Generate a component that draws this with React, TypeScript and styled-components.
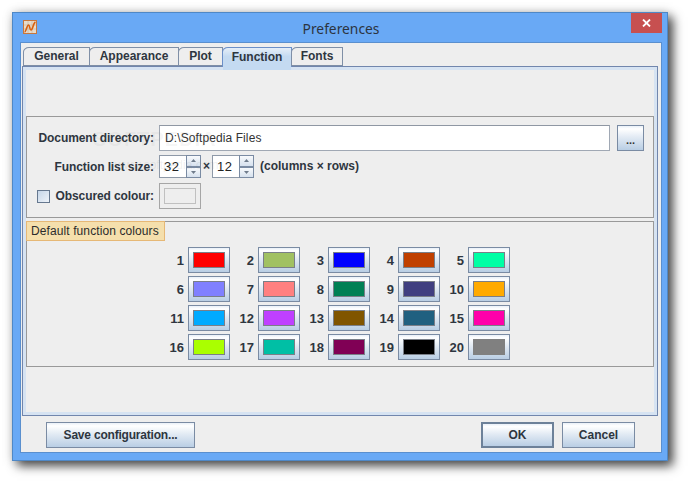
import React from "react";
import styled, { createGlobalStyle } from "styled-components";

const GlobalStyle = createGlobalStyle`
  html, body {
    margin: 0;
    padding: 0;
    background: #fff;
    width: 689px;
    height: 481px;
    overflow: hidden;
  }
  body {
    font-family: "Liberation Sans", Arial, sans-serif;
    font-size: 12px;
    color: #2b2b2b;
  }
`;

const Page = styled.div`
  padding: 12px 0 0 12px;
`;

const Win = styled.div`
  position: relative;
  box-sizing: border-box;
  width: 656px;
  height: 449px;
  background: #69a9f5;
  border: 1px solid #4f88c6;
  box-shadow: 5px 5px 10px rgba(0, 0, 0, 0.7), 0 0 10px rgba(0, 0, 0, 0.15);
  display: flex;
  flex-direction: column;
  padding: 0 5px 7px 7px;
`;

const TitleBar = styled.div`
  height: 29px;
  flex: none;
  display: flex;
  align-items: center;
  justify-content: center;
  position: relative;
`;

const Title = styled.span`
  font-family: "Noto Sans", "Open Sans", sans-serif;
  font-size: 13.8px;
  color: #2c3440;
  margin-top: 1px;
`;

const AppIcon = styled.svg`
  position: absolute;
  left: 3px;
  top: 7px;
  width: 14px;
  height: 14px;
`;

const CloseBtn = styled.div`
  position: absolute;
  right: 0;
  top: 0;
  width: 31px;
  height: 20px;
  background: #c75050;
  display: flex;
  align-items: center;
  justify-content: center;
`;

const Body = styled.div`
  flex: 1;
  background: #eeeeee;
  border: 1px solid #5a8fce;
  display: flex;
  flex-direction: column;
  padding: 4px 3px 0 1px;
  min-height: 0;
`;

const TabRow = styled.div`
  display: flex;
  height: 20px;
  padding-left: 1px;
  position: relative;
  z-index: 1;
  flex: none;
`;

const Tab = styled.div<{ $w: number; $active?: boolean }>`
  position: relative;
  box-sizing: border-box;
  width: ${(p) => p.$w}px;
  height: ${(p) => (p.$active ? 20 : 19)}px;
  margin-right: -1px;
  background: ${(p) => (p.$active ? "linear-gradient(#e6eff8, #c4daf1 45%)" : "#eeeeee")};
  border: 1px solid #7f8fa6;
  border-color: ${(p) => (p.$active ? "#6b8fc8" : "#7f8fa6")};
  border-bottom: ${(p) => (p.$active ? "none" : "1px solid #7f8fa6")};
  border-top-left-radius: 6px 5px;
  font-weight: bold;
  font-size: 12px;
  color: #2e3640;
  display: flex;
  align-items: center;
  justify-content: center;
  padding-bottom: ${(p) => (p.$active ? 2 : 1)}px;
  ${(p) =>
    p.$active &&
    `
    &::after {
      content: "";
      position: absolute;
      left: 0;
      right: 0;
      top: 100%;
      height: 3px;
      background: #c4daf1;
    }
  `}
`;

const TabPanel = styled.div`
  box-sizing: border-box;
  height: 350px;
  flex: none;
  margin-top: -1px;
  background: #eeeeee;
  border: 1px solid #7186ad;
  box-shadow: inset 0 0 0 3px #d6e3f2;
  padding: 49px 3px 0 3px;
  display: flex;
  flex-direction: column;
  gap: 3px;
`;

const Section = styled.div<{ $h: number }>`
  box-sizing: border-box;
  height: ${(p) => p.$h}px;
  border: 1px solid #999999;
  position: relative;
`;

const FormGrid = styled.div`
  display: grid;
  grid-template-columns: 127px 1fr;
  grid-template-rows: 26px 24px 26px;
  row-gap: 4px;
  column-gap: 5px;
  padding: 8px 9px 0 0;
`;

const FieldLabel = styled.label`
  font-weight: bold;
  letter-spacing: -0.1px;
  color: #2e3640;
  display: flex;
  align-items: center;
  justify-content: flex-end;
  gap: 6px;
`;

const CheckBox = styled.span`
  box-sizing: border-box;
  width: 13px;
  height: 13px;
  border: 1px solid #66788f;
  background: linear-gradient(135deg, #c6d6e8, #eef3f9);
`;

const FieldRow = styled.div`
  display: flex;
  align-items: stretch;
`;

const TextField = styled.div`
  flex: 1;
  background: #fff;
  border: 1px solid #a0a8b4;
  border-top-color: #8f97a3;
  display: flex;
  align-items: center;
  padding-left: 5px;
  font-size: 12px;
  letter-spacing: 0.1px;
  color: #333;
`;

const gloss = "linear-gradient(#e9f0f8 0%, #ffffff 12%, #e3ebf4 45%, #b9cee4 100%)";

const BrowseBtn = styled.div`
  box-sizing: border-box;
  width: 27px;
  height: 26px;
  margin-left: 7px;
  border: 1px solid #7a8ba3;
  background: ${gloss};
  font-weight: bold;
  font-size: 11px;
  text-align: center;
  line-height: 29px;
  color: #333;
`;

const Spinner = styled.div`
  box-sizing: border-box;
  width: 42px;
  height: 23px;
  display: flex;
`;

const SpinValue = styled.div`
  box-sizing: border-box;
  width: 27px;
  background: #fff;
  border: 1px solid #8e99a8;
  border-right: none;
  display: flex;
  align-items: center;
  padding-left: 4px;
  font-size: 13px;
  letter-spacing: 0.6px;
  color: #222;
`;

const SpinArrows = styled.div`
  width: 15px;
  display: flex;
  flex-direction: column;
`;

const SpinArrow = styled.div`
  flex: 1;
  box-sizing: border-box;
  border: 1px solid #7a8ba3;
  background: linear-gradient(#f8fafc, #d6e1ee);
  display: flex;
  align-items: center;
  justify-content: center;
`;

const Times = styled.span`
  width: 11px;
  text-align: center;
  font-weight: bold;
  line-height: 23px;
  color: #2e3640;
`;

const Hint = styled.span`
  font-weight: bold;
  line-height: 23px;
  margin-left: 6px;
  color: #2e3640;
`;

const ObscuredBtn = styled.div`
  box-sizing: border-box;
  width: 42px;
  height: 26px;
  border: 1px solid #a6a6a6;
  padding: 4px;
`;

const ObscuredFill = styled.div`
  box-sizing: border-box;
  height: 100%;
  border: 1px solid #c0c0c0;
  background: #eeeeee;
`;

const SectionTag = styled.div`
  position: absolute;
  left: -1px;
  top: -1px;
  box-sizing: border-box;
  height: 20px;
  width: 139px;
  padding-left: 4px;
  line-height: 18px;
  background: #f5dfac;
  border: 1px solid #e6b876;
  font-size: 12px;
  letter-spacing: 0.1px;
  color: #2b2b2b;
`;

const ColourGrid = styled.div`
  display: grid;
  grid-template-columns: repeat(5, 70px);
  grid-auto-rows: 26px;
  row-gap: 3px;
  padding: 25px 0 0 133px;
`;

const ColourCell = styled.div`
  display: flex;
  align-items: center;
  justify-content: flex-end;
  gap: 4px;
`;

const ColourNum = styled.span`
  font-weight: bold;
  font-size: 13px;
  color: #2e3640;
`;

const ColourBtn = styled.div`
  box-sizing: border-box;
  width: 42px;
  height: 26px;
  border: 1px solid #7a8ba3;
  background: ${gloss};
  padding: 4px;
`;

const Swatch = styled.div<{ $c: string; $plain?: boolean }>`
  box-sizing: border-box;
  height: 100%;
  background: ${(p) => p.$c};
  border: 1px solid ${(p) => (p.$plain ? p.$c : "#7a7f88")};
`;

const Footer = styled.div`
  display: flex;
  align-items: flex-start;
  padding: 6px 23px 0 24px;
  flex: 1;
`;

const DlgButton = styled.div<{ $w: number; $def?: boolean; $tight?: boolean }>`
  box-sizing: border-box;
  width: ${(p) => p.$w}px;
  height: 26px;
  border: ${(p) => (p.$def ? "2px solid #6d8199" : "1px solid #7a8ba3")};
  background: ${gloss};
  font-weight: bold;
  font-size: 12px;
  letter-spacing: ${(p) => (p.$tight ? "-0.2px" : "0")};
  color: #2e3640;
  display: flex;
  align-items: center;
  justify-content: center;
`;

const Spacer = styled.div`
  flex: 1;
`;

const CancelGap = styled.div`
  width: 8px;
`;

const Watermark = styled.div`
  position: absolute;
  left: 80px;
  top: 115px;
  font-size: 20px;
  font-weight: bold;
  letter-spacing: 1px;
  color: rgba(120, 120, 120, 0.08);
  pointer-events: none;
`;

const WatermarkUrl = styled.div`
  position: absolute;
  left: 102px;
  top: 145px;
  font-size: 12px;
  color: rgba(120, 120, 120, 0.12);
  pointer-events: none;
`;

const colours: { c: string; plain?: boolean }[] = [
  { c: "#ff0000" }, { c: "#a1c162" }, { c: "#0000ff" }, { c: "#c04000" }, { c: "#00ffa5" },
  { c: "#8080ff" }, { c: "#ff8080" }, { c: "#008055" }, { c: "#403f80" }, { c: "#ffaa00" },
  { c: "#00aaff" }, { c: "#bf40ff" }, { c: "#805500" }, { c: "#206080" }, { c: "#ff00aa" },
  { c: "#aaff00" }, { c: "#00bfa5" }, { c: "#800055" }, { c: "#000000" }, { c: "#808080", plain: true },
];

const tabs = [
  { name: "General", w: 67 },
  { name: "Appearance", w: 90 },
  { name: "Plot", w: 45 },
  { name: "Function", w: 70, active: true },
  { name: "Fonts", w: 52 },
];

const UpArrow = () => (
  <svg width="5" height="3" viewBox="0 0 5 3">
    <path d="M0 3 L2.5 0 L5 3 Z" fill="#6f7c8c" />
  </svg>
);

const DownArrow = () => (
  <svg width="5" height="3" viewBox="0 0 5 3">
    <path d="M0 0 L5 0 L2.5 3 Z" fill="#6f7c8c" />
  </svg>
);

function NumberSpinner({ value }: { value: number }) {
  return (
    <Spinner>
      <SpinValue>{value}</SpinValue>
      <SpinArrows>
        <SpinArrow><UpArrow /></SpinArrow>
        <SpinArrow><DownArrow /></SpinArrow>
      </SpinArrows>
    </Spinner>
  );
}

export default function App() {
  return (
    <Page>
      <GlobalStyle />
      <Win>
        <TitleBar>
          <AppIcon viewBox="0 0 14 14">
            <rect x="0.5" y="0.5" width="13" height="13" fill="#e8dccb" stroke="#c9773c" />
            <path d="M1 5H13M1 9H13M5 1V13M9 1V13" stroke="#c4b6a4" strokeWidth="0.6" />
            <path d="M1.5 12 C3 12 4 5 5.5 5 C7 5 6.5 10 8 10 C10 10 10 3 12.5 2" fill="none" stroke="#d9600f" strokeWidth="1.6" />
          </AppIcon>
          <Title>Preferences</Title>
          <CloseBtn>
            <svg width="9" height="8" viewBox="0 0 9 8">
              <path d="M1 0.5 L8 7.5 M8 0.5 L1 7.5" stroke="#fff" strokeWidth="1.8" />
            </svg>
          </CloseBtn>
        </TitleBar>
        <Body>
          <TabRow>
            {tabs.map((t) => (
              <Tab key={t.name} $w={t.w} $active={t.active}>{t.name}</Tab>
            ))}
          </TabRow>
          <TabPanel>
            <Section $h={102}>
              <FormGrid>
                <FieldLabel>Document directory:</FieldLabel>
                <FieldRow>
                  <TextField>D:\Softpedia Files</TextField>
                  <BrowseBtn>...</BrowseBtn>
                </FieldRow>
                <FieldLabel>Function list size:</FieldLabel>
                <FieldRow>
                  <NumberSpinner value={32} />
                  <Times>×</Times>
                  <NumberSpinner value={12} />
                  <Hint>(columns × rows)</Hint>
                </FieldRow>
                <FieldLabel>
                  <CheckBox />
                  Obscured colour:
                </FieldLabel>
                <FieldRow>
                  <ObscuredBtn>
                    <ObscuredFill />
                  </ObscuredBtn>
                </FieldRow>
              </FormGrid>
            </Section>
            <Section $h={146}>
              <SectionTag>Default function colours</SectionTag>
              <ColourGrid>
                {colours.map((s, i) => (
                  <ColourCell key={i}>
                    <ColourNum>{i + 1}</ColourNum>
                    <ColourBtn>
                      <Swatch $c={s.c} $plain={s.plain} />
                    </ColourBtn>
                  </ColourCell>
                ))}
              </ColourGrid>
            </Section>
          </TabPanel>
          <Footer>
            <DlgButton $w={149} $tight>Save configuration...</DlgButton>
            <Spacer />
            <DlgButton $w={73} $def>OK</DlgButton>
            <CancelGap />
            <DlgButton $w={73}>Cancel</DlgButton>
          </Footer>
        </Body>
        <Watermark>SOFTPEDIA</Watermark>
        <WatermarkUrl>www.softpedia.com</WatermarkUrl>
      </Win>
    </Page>
  );
}
